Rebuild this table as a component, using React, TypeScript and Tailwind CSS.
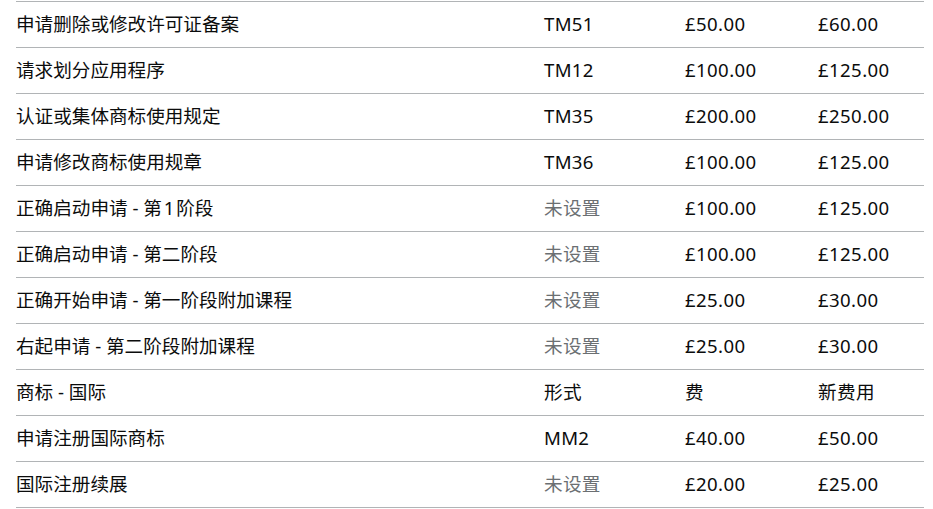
const rows: [string, string, string, string, boolean][] = [
  ['申请删除或修改许可证备案', 'TM51', '£50.00', '£60.00', false],
  ['请求划分应用程序', 'TM12', '£100.00', '£125.00', false],
  ['认证或集体商标使用规定', 'TM35', '£200.00', '£250.00', false],
  ['申请修改商标使用规章', 'TM36', '£100.00', '£125.00', false],
  ['正确启动申请 - 第\u200a1\u200a阶段', '未设置', '£100.00', '£125.00', true],
  ['正确启动申请 - 第二阶段', '未设置', '£100.00', '£125.00', true],
  ['正确开始申请 - 第一阶段附加课程', '未设置', '£25.00', '£30.00', true],
  ['右起申请 - 第二阶段附加课程', '未设置', '£25.00', '£30.00', true],
  ['商标 - 国际', '形式', '费', '新费用', false],
  ['申请注册国际商标', 'MM2', '£40.00', '£50.00', false],
  ['国际注册续展', '未设置', '£20.00', '£25.00', true],
]

export default function App() {
  return (
    <div className="bg-white w-[933px] h-[509px] overflow-hidden pl-4 pt-px font-['Noto_Sans','Noto_Sans_CJK_SC',sans-serif] text-[#0b0c0c] text-[18.6px]">
      <div className="w-[908px] border-t border-[#b1b4b6]">
        {rows.map(([name, form, fee, newFee, unset], i) => (
          <div key={i} className="flex h-[46px] items-center pb-[2px] border-b border-[#b1b4b6]">
            <div className="w-[528px]">{name}</div>
            <div className={`w-[141px] tracking-[0.3px] ${unset ? 'text-[#6b6f72]' : ''}`}>{form}</div>
            <div className="w-[133px] tracking-[0.4px]">{fee}</div>
            <div className="tracking-[0.4px]">{newFee}</div>
          </div>
        ))}
      </div>
    </div>
  )
}
